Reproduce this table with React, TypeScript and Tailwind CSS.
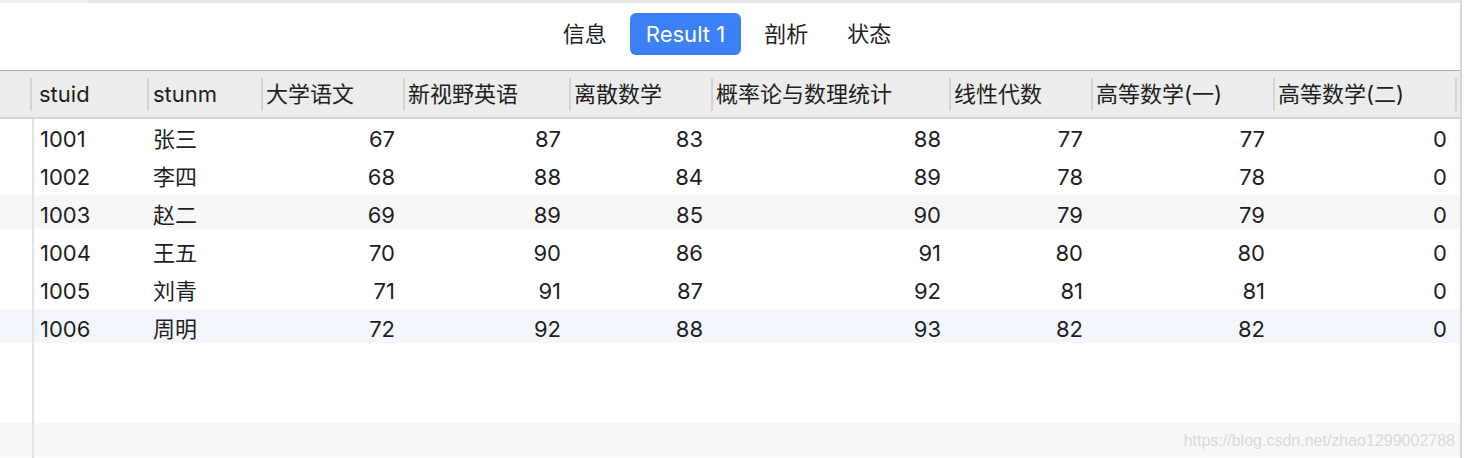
import React from 'react';

const FONT = { fontFamily: 'Inter, "Noto Sans CJK SC", sans-serif' };

const columns = [
  { title: 'stuid', width: 'w-[117px]', pad: 'pl-[7px]' },
  { title: 'stunm', width: 'w-[114px]', pad: 'pl-[4px]' },
  { title: '大学语文', width: 'w-[142px]', pad: 'pl-[3px]' },
  { title: '新视野英语', width: 'w-[166px]', pad: 'pl-[3px]' },
  { title: '离散数学', width: 'w-[142px]', pad: 'pl-[3px]' },
  { title: '概率论与数理统计', width: 'w-[238px]', pad: 'pl-[3px]' },
  { title: '线性代数', width: 'w-[142px]', pad: 'pl-[3px]' },
  { title: '高等数学(一)', width: 'w-[182px]', pad: 'pl-[3px]' },
  { title: '高等数学(二)', width: 'w-[182px]', pad: 'pl-[3px]' },
];

const bodyWidths = [
  'w-[113px]',
  'w-[114px]',
  'w-[142px]',
  'w-[166px]',
  'w-[142px]',
  'w-[238px]',
  'w-[142px]',
  'w-[182px]',
  'w-[182px]',
];

const rows: (string | number)[][] = [
  ['1001', '张三', 67, 87, 83, 88, 77, 77, 0],
  ['1002', '李四', 68, 88, 84, 89, 78, 78, 0],
  ['1003', '赵二', 69, 89, 85, 90, 79, 79, 0],
  ['1004', '王五', 70, 90, 86, 91, 80, 80, 0],
  ['1005', '刘青', 71, 91, 87, 92, 81, 81, 0],
  ['1006', '周明', 72, 92, 88, 93, 82, 82, 0],
  [],
  [],
  [],
];

function rowBg(index: number) {
  if (index === 5) return 'bg-[#f3f7fd]';
  if (index % 3 === 2) return 'bg-[#f7f7f7]';
  return 'bg-white';
}

export default function App() {
  return (
    <div className="relative flex h-[458px] w-[1464px] overflow-hidden bg-white text-[#1e1e1e]" style={FONT}>
      <div className="flex w-[1460px] flex-col">
        {/* top strip */}
        <div className="flex h-[3px] shrink-0">
          <div className="w-[88px] bg-[#f1f1f1]" />
          <div className="flex-1 bg-[#e6e6e6]" />
        </div>

        {/* tabs */}
        <div className="flex h-[67px] shrink-0 justify-center pr-[6px] pt-[10px]">
          <div className="flex h-[42px] items-center gap-[7px] text-[22px] leading-none">
            <div className="px-[16px]">信息</div>
            <div className="flex h-[42px] items-center rounded-[6px] bg-[#3b80f5] px-[16px] text-white">Result 1</div>
            <div className="px-[16px]">剖析</div>
            <div className="px-[16px]">状态</div>
          </div>
        </div>

        {/* header */}
        <div className="flex h-[49px] shrink-0 border-t border-b-2 border-t-[#a8a8a8] border-b-[#d4d4d4] bg-[#ececec] text-[22px]">
          <div className="w-[30px]" />
          {columns.map((col) => (
            <div key={col.title} className={`flex items-center ${col.width}`}>
              <div className="h-[33px] w-[2px] shrink-0 bg-[#d3d3d3]" />
              <span className={`whitespace-nowrap ${col.pad}`}>{col.title}</span>
            </div>
          ))}
          <div className="flex flex-1 items-center">
            <div className="h-[33px] w-[2px] shrink-0 bg-[#d3d3d3]" />
          </div>
        </div>

        {/* body */}
        <div className="relative flex-1 overflow-hidden">
          {rows.map((row, i) => (
            <div key={i} className="h-[38px]">
              <div className={`flex h-[34px] ${rowBg(i)} text-[22px] leading-[24px]`}>
                <div className="w-[34px] shrink-0 border-r-2 border-[#e3e3e3]" />
                {bodyWidths.map((w, c) => (
                  <div
                    key={c}
                    className={`${w} shrink-0 pt-[8px] ${c < 2 ? 'pl-[6px] text-left' : 'pr-[8px] text-right'}`}
                  >
                    {row[c] ?? ''}
                  </div>
                ))}
              </div>
              <div className="flex h-[4px]">
                <div className="w-[34px] shrink-0 border-r-2 border-[#e3e3e3]" />
              </div>
            </div>
          ))}
        </div>
      </div>

      {/* right edge */}
      <div className="w-[2px] bg-[#d6d6d6]" />
      <div className="w-[2px] bg-white" />

      {/* watermark */}
      <div
        className="absolute bottom-[5px] right-[9px] text-[16px] text-[#d9d9d9]"
        style={{ fontFamily: '"Liberation Sans", Arial, sans-serif' }}
      >
        https://blog.csdn.net/zhao1299002788
      </div>
    </div>
  );
}
